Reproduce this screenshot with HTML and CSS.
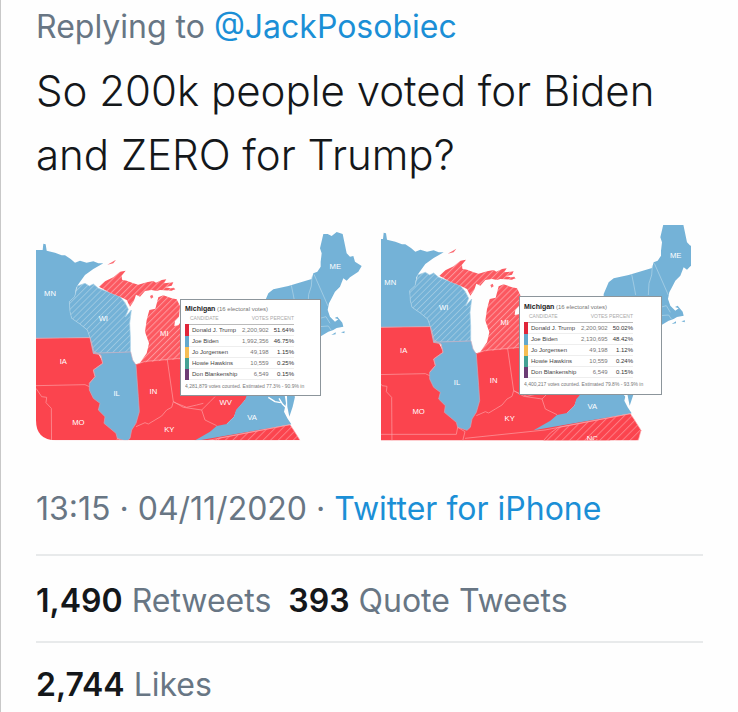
FILE: index.html
```
<!DOCTYPE html>
<html lang="en">

<head>
    <meta charset="UTF-8">
    <meta name="viewport" content="width=device-width, initial-scale=1.0">
    <title>Tweet</title>
    <link rel="stylesheet" href="styles.css">
</head>

<body>
    <!-- Shared map, used by both pictures -->
    <svg class="defs" width="0" height="0" aria-hidden="true">
        <defs>
            <pattern id="hatchBlue" width="13" height="13" patternUnits="userSpaceOnUse" patternTransform="rotate(45)">
                <rect width="13" height="13" fill="#74b2d7"/>
                <rect width="2" height="13" fill="#a9cfe5"/>
            </pattern>
            <pattern id="hatchRed" width="13" height="13" patternUnits="userSpaceOnUse" patternTransform="rotate(45)">
                <rect width="13" height="13" fill="#fc5860"/>
                <rect width="3" height="13" fill="#fd969b"/>
            </pattern>
            <pattern id="hatchNC" width="16" height="16" patternUnits="userSpaceOnUse" patternTransform="rotate(45)">
                <rect width="16" height="16" fill="#fb444e"/>
                <rect width="3" height="16" fill="#fc7d84"/>
            </pattern>
            <clipPath id="clipLeft"><path d="M18 15H1010V661H78Q18 661 18 601Z"/></clipPath>
            <clipPath id="clipRight"><path d="M18 15H948V661H18Z"/></clipPath>
            <g id="states" stroke-linejoin="round">
                <!-- IA, MO, IN, OH, KY, TN -->
                <path fill="#fb444e" d="M0 355L180 353L215 420L320 433L345 424L480 410L480 490L660 490L665 530L645 540L620 570L612 590L590 612L620 636L782 614L700 720L0 720Z"/>
                <!-- NC -->
                <path fill="url(#hatchNC)" stroke="#fca3a8" stroke-width="2" d="M520 694L540 672L564 655L780 614L792 632L812 664L804 694L780 720L520 720Z"/>
                <!-- MN -->
                <path fill="#74b2d7" d="M0 90L38 90L40 71L47 73L50 92L75 98L95 106L105 106L122 117L135 128L150 122L170 128L190 124L205 130L220 130L190 147L165 165L145 193L138 205L134 230L118 245L120 275L125 295L150 312L172 330L180 353L0 355Z"/>
                <!-- WI -->
                <path fill="url(#hatchBlue)" stroke="#a6cfe6" stroke-width="2" d="M142 198L165 190L178 198L190 192L205 205L240 218L270 230L285 248L295 268L286 291L304 270L299 310L301 350L301 396L190 400L180 353L172 330L150 312L125 295L120 275L118 245L134 230Z"/>
                <!-- MI -->
                <path fill="url(#hatchRed)" d="M207 200L225 184L250 172L270 155L287 152L275 167L276 179L290 182L310 190L325 194L350 187L370 183L378 188L395 180L409 178L402 190L430 187L425 197L405 202L435 207L425 212L390 210L380 213L365 210L345 213L330 230L318 224L312 242L300 260L290 240L270 230L240 218Z"/>
                <path fill="url(#hatchRed)" d="M385 232L400 226L425 235L440 238L450 258L447 290L435 303L433 318L445 316L455 302L480 330L480 415L330 428L350 400L357 370L345 335L350 300L358 270L376 266Z"/>
                <path fill="#fb6a72" d="M232 134L258 119L250 130ZM360 228L367 224L370 232L363 236ZM420 205L432 203L436 209Z"/>
                <!-- IL -->
                <path fill="#74b2d7" stroke="#c9a9bd" stroke-width="2" d="M190 400L302 396L308 420L318 435L325 530L328 575L318 610L305 630L300 655L290 664L262 655L258 640L240 625L222 610L225 590L205 570L210 550L190 535L178 510L178 490L195 470L190 450L218 430L212 405Z"/>
                <!-- VA, MD, DE -->
                <path fill="#74b2d7" d="M490 664L540 635L560 618L590 612L612 590L618 570L645 540L660 500L760 500L768 550L762 575L772 595L784 613Z"/>
                <path fill="#74b2d7" d="M770 500L795 530L788 560L778 590L772 560Z"/>
                <path fill="none" stroke="#fff" stroke-width="4" d="M715 532L735 545L752 548M747 535L758 553L770 565"/>
                <!-- New England and NY -->
                <path fill="#74b2d7" d="M700 255L715 220L730 208L775 198L845 177L850 160L862 155L872 140L872 125L875 100L870 85L880 42L893 42L905 48L920 36L938 42L950 100L960 110L970 108L975 125L995 138L985 155L960 172L950 182L940 175L930 200L915 215L905 235L897 250L893 270L900 290L915 305L925 298L914 294L922 290L937 308L940 320L920 324L910 330L895 335L870 350L850 365L700 330Z"/>
                <path fill="#74b2d7" d="M904 345L917 337L917 343ZM933 337L944 334L943 340Z"/>
                <!-- Borders -->
                <g fill="none" stroke="#b5d6e9" stroke-width="2">
                    <path d="M784 196L790 225L796 258M846 170L844 198L836 223L834 258M852 163L894 258M870 295L888 290L900 310M868 320L895 318L903 330"/>
                </g>
                <g fill="none" stroke="#fca3a8" stroke-width="2">
                    <path d="M0 355L180 353L192 395L212 405L218 430L190 450L195 470L178 490M18 497L165 494L178 500M18 505L35 530L50 532L48 548L64 565L65 720"/>
                    <path d="M412 420L430 545M320 433L345 424L480 412M318 620L345 608L355 612L375 600L395 588L410 570L425 562L430 545L440 550L470 562L500 555L520 550M430 545L460 562L515 570L525 600L560 617M515 570L540 545L555 530"/>
                    <path d="M0 676L258 676L262 655M284 688L524 663L780 614M262 655L284 668L276 700"/>
                </g>
                <g class="map-label">
                    <text x="60" y="228">MN</text>
                    <text x="220" y="303">WI</text>
                    <text x="403" y="347">MI</text>
                    <text x="100" y="433">IA</text>
                    <text x="260" y="527">IL</text>
                    <text x="370" y="523">IN</text>
                    <text x="145" y="614">MO</text>
                    <text x="418" y="635">KY</text>
                    <text x="587" y="556">WV</text>
                    <text x="666" y="600">VA</text>
                    <text x="666" y="696">NC</text>
                    <text x="916" y="148">ME</text>
                </g>
            </g>
        </defs>
    </svg>

    <main class="tweet">
        <p class="reply">Replying to <a href="#">@JackPosobiec</a></p>
        <p class="text">So 200k people voted for Biden and ZERO for Trump?</p>

        <div class="media">
            <figure class="map">
                <svg viewBox="18 15 990 648" role="img" aria-label="Election map">
                    <g clip-path="url(#clipLeft)"><use href="#states"/></g>
                </svg>
                <div class="results">
                    <p class="results-title"><b>Michigan</b> (16 electoral votes)</p>
                    <table>
                        <thead>
                            <tr><th class="name">CANDIDATE</th><th>VOTES</th><th>PERCENT</th></tr>
                        </thead>
                        <tbody>
                            <tr class="rep"><td class="name">Donald J. Trump</td><td>2,200,902</td><td class="pct">51.64%</td></tr>
                            <tr class="dem"><td class="name">Joe Biden</td><td>1,992,356</td><td class="pct">46.75%</td></tr>
                            <tr class="lib"><td class="name">Jo Jorgensen</td><td>49,198</td><td class="pct">1.15%</td></tr>
                            <tr class="grn"><td class="name">Howie Hawkins</td><td>10,559</td><td class="pct">0.25%</td></tr>
                            <tr class="tax"><td class="name">Don Blankenship</td><td>6,549</td><td class="pct">0.15%</td></tr>
                        </tbody>
                    </table>
                    <p class="results-note">4,281,879 votes counted. Estimated 77.3% - 90.9% in</p>
                </div>
            </figure>

            <figure class="map">
                <svg viewBox="18 15 990 648" role="img" aria-label="Election map">
                    <g clip-path="url(#clipRight)"><use href="#states" x="-14" y="-33"/></g>
                </svg>
                <div class="results results-later">
                    <p class="results-title"><b>Michigan</b> (16 electoral votes)</p>
                    <table>
                        <thead>
                            <tr><th class="name">CANDIDATE</th><th>VOTES</th><th>PERCENT</th></tr>
                        </thead>
                        <tbody>
                            <tr class="rep"><td class="name">Donald J. Trump</td><td>2,200,902</td><td class="pct">50.02%</td></tr>
                            <tr class="dem"><td class="name">Joe Biden</td><td>2,130,695</td><td class="pct">48.42%</td></tr>
                            <tr class="lib"><td class="name">Jo Jorgensen</td><td>49,198</td><td class="pct">1.12%</td></tr>
                            <tr class="grn"><td class="name">Howie Hawkins</td><td>10,559</td><td class="pct">0.24%</td></tr>
                            <tr class="tax"><td class="name">Don Blankenship</td><td>6,549</td><td class="pct">0.15%</td></tr>
                        </tbody>
                    </table>
                    <p class="results-note">4,400,217 votes counted. Estimated 79.8% - 93.9% in</p>
                </div>
            </figure>
        </div>

        <p class="meta">13:15 · 04/11/2020 · <a href="#">Twitter for iPhone</a></p>
        <div class="stats">
            <span><b>1,490</b> Retweets</span>
            <span><b>393</b> Quote Tweets</span>
        </div>
        <div class="stats">
            <span><b>2,744</b> Likes</span>
        </div>
    </main>
</body>

</html>
```
FILE: styles.css
```
body {
    margin: 0;
    background: #fefefe;
    font-family: Inter, "Liberation Sans", sans-serif;
    color: #14171a;
}

p,
figure {
    margin: 0;
}

a {
    color: #1b8fd6;
    text-decoration: none;
}

.defs {
    position: absolute;
}

.tweet {
    box-sizing: border-box;
    min-height: 100vh;
    padding: 7px 35px 0;
    border-left: 1px solid #c8c8c8;
}

.reply,
.meta,
.stats {
    font-size: 32px;
    line-height: 40px;
    color: #687684;
}

.text {
    max-width: 640px;
    margin-top: 12px;
    font-size: 42px;
    font-weight: 300;
    line-height: 64px;
}

/* pictures */
.media {
    display: grid;
    grid-template-columns: 1fr 1fr;
    gap: 15px;
    margin: 38px -8px 0 0;
}

.map {
    position: relative;
}

.map svg {
    display: block;
    width: 100%;
}

.map-label {
    fill: #fff;
    font-family: "Liberation Sans", Arial, sans-serif;
    font-size: 23px;
    text-anchor: middle;
}

/* box lying over the map */
.results {
    position: absolute;
    left: 144px;
    top: 74px;
    box-sizing: border-box;
    width: 141px;
    padding: 4px;
    border: 1px solid #8c959b;
    background: #fff;
    color: #777;
    font-family: "Liberation Sans", Arial, sans-serif;
    font-size: 6px;
    line-height: 10px;
    white-space: nowrap;
}

.results-later {
    left: 138px;
    top: 71px;
    width: 143px;
    padding: 5px 4px;
}

.results-title b {
    color: #222;
    font-size: 7px;
}

.results table {
    width: 109px;
    border-collapse: collapse;
}

.results th,
.results td {
    box-sizing: border-box;
    height: 11px;
    padding: 0;
    border-bottom: 1px solid #eee;
    line-height: 10px;
    text-align: right;
}

.results th {
    height: 10px;
    border-color: #bbb;
    color: #aaa;
    font-size: 5px;
    font-weight: normal;
    line-height: 9px;
}

.results .name {
    padding-left: 3px;
    text-align: left;
}

.results td.name {
    border-left: 4px solid;
    color: #444;
}

.results .pct {
    color: #333;
}

.results .rep .name {
    border-left-color: #e0263a;
}

.results .dem .name {
    border-left-color: #63a8cd;
}

.results .lib .name {
    border-left-color: #f6bd53;
}

.results .grn .name {
    border-left-color: #45a193;
}

.results .tax .name {
    border-left-color: #6c3c74;
}

.results-note {
    margin-top: 1px;
    overflow: hidden;
    font-size: 5px;
}

/* date and counters */
.meta {
    margin-top: 48px;
    padding-bottom: 25px;
}

.stats {
    display: flex;
    gap: 17px;
    padding: 25px 0 20px;
    border-top: 2px solid #e8eaeb;
}

.stats + .stats {
    padding: 22px 0 0;
}

.stats b {
    color: #14171a;
    font-weight: 600;
}
```
